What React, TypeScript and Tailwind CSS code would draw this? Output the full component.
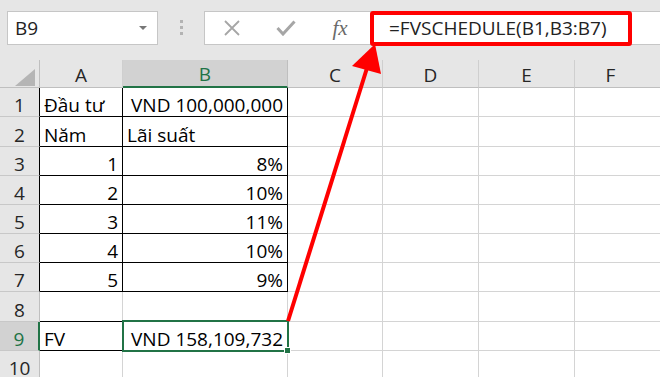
import React from "react";

type Cell = { t?: string; right?: boolean };
type RowData = { n: number; h: string; a: Cell; b: Cell };

const rows: RowData[] = [
  { n: 1, h: "h-[29px]", a: { t: "Đầu tư" }, b: { t: "VND 100,000,000", right: true } },
  { n: 2, h: "h-[30px]", a: { t: "Năm" }, b: { t: "Lãi suất" } },
  { n: 3, h: "h-[29px]", a: { t: "1", right: true }, b: { t: "8%", right: true } },
  { n: 4, h: "h-[29px]", a: { t: "2", right: true }, b: { t: "10%", right: true } },
  { n: 5, h: "h-[29px]", a: { t: "3", right: true }, b: { t: "11%", right: true } },
  { n: 6, h: "h-[29px]", a: { t: "4", right: true }, b: { t: "10%", right: true } },
  { n: 7, h: "h-[29px]", a: { t: "5", right: true }, b: { t: "9%", right: true } },
  { n: 8, h: "h-[30px]", a: {}, b: {} },
  { n: 9, h: "h-[29px]", a: { t: "FV" }, b: { t: "VND 158,109,732", right: true } },
  { n: 10, h: "h-[29px]", a: {}, b: {} },
];

function CellText({ cell }: { cell: Cell }) {
  return (
    <div
      className={`flex h-full items-end px-[4px] text-[19px] leading-[22px] text-black ${
        cell.right ? "justify-end" : "justify-start"
      }`}
    >
      {cell.t}
    </div>
  );
}

function SheetRow({ row }: { row: RowData }) {
  const boxed = row.n <= 7;
  const selected = row.n === 9;
  const headCls = selected
    ? "bg-[#d2d2d2] text-[#217346] border-r-2 border-r-[#217346]"
    : boxed
      ? "bg-[#e6e6e6] text-[#262626] border-r border-r-black"
      : "bg-[#e6e6e6] text-[#262626] border-r border-r-[#bfbfbf]";
  const aBorder = boxed
    ? "border-r-black border-b-black"
    : row.n === 8 || row.n === 9
      ? "border-r-[#d4d4d4] border-b-black"
      : "border-r-[#d4d4d4] border-b-[#d4d4d4]";
  const bBorder = boxed
    ? "border-r-black border-b-black"
    : row.n === 8
      ? "border-r-[#d4d4d4] border-b-black"
      : "border-r-[#d4d4d4] border-b-[#d4d4d4]";

  return (
    <div className={`flex ${row.h}`}>
      <div
        className={`flex w-[40px] shrink-0 items-end justify-center border-b border-b-[#c8c8c8] text-[19px] leading-[22px] ${headCls}`}
      >
        {row.n}
      </div>
      <div className={`w-[83px] shrink-0 border-r border-b ${aBorder}`}>
        <CellText cell={row.a} />
      </div>
      <div className={`w-[165px] shrink-0 border-r border-b ${bBorder}`}>
        <CellText cell={row.b} />
      </div>
      <div className="w-[95px] shrink-0 border-r border-b border-[#d4d4d4]" />
      <div className="w-[96px] shrink-0 border-r border-b border-[#d4d4d4]" />
      <div className="w-[96px] shrink-0 border-r border-b border-[#d4d4d4]" />
      <div className="flex-1 border-b border-[#d4d4d4]" />
    </div>
  );
}

function ColHead({ label, w, active }: { label: string; w: string; active?: boolean }) {
  return (
    <div
      className={`flex shrink-0 items-end justify-center text-[19px] leading-[22px] pb-[1px] ${w} ${
        active
          ? "bg-[#d2d2d2] text-[#217346] border-r border-r-[#bfbfbf] border-b-2 border-b-[#217346]"
          : "bg-[#e6e6e6] text-[#262626] border-r border-r-[#cfcfcf] border-b border-b-[#bfbfbf]"
      }`}
    >
      {label}
    </div>
  );
}

export default function App() {
  return (
    <div className="relative h-[377px] w-[660px] overflow-hidden bg-white font-['Open_Sans',sans-serif]">
      {/* name box + formula bar */}
      <div className="flex h-[60px] items-start bg-[#e6e6e6] pt-[11px]">
        <div className="ml-[7px] flex h-[34px] w-[151px] items-center justify-between border border-[#c6c6c6] bg-white pl-[7px] pr-[10px]">
          <span className="text-[19px] leading-none text-[#222]">B9</span>
          <svg width="8" height="5" viewBox="0 0 8 5">
            <path d="M0 0 L8 0 L4 4 Z" fill="#777" />
          </svg>
        </div>
        <div className="flex w-[46px] flex-col items-center gap-[3px] pt-[9px]">
          <span className="h-[3px] w-[3px] bg-[#b3b3b3]" />
          <span className="h-[3px] w-[3px] bg-[#b3b3b3]" />
          <span className="h-[3px] w-[3px] bg-[#b3b3b3]" />
        </div>
        <div className="flex h-[34px] flex-1 items-center border border-r-0 border-[#c6c6c6] bg-white">
          <div className="flex w-[162px] items-center">
            <div className="flex w-[54px] justify-center">
              <svg width="18" height="16" viewBox="0 0 18 16">
                <path d="M2 1 L16 15 M16 1 L2 15" stroke="#a6a6a6" strokeWidth="1.8" />
              </svg>
            </div>
            <div className="flex w-[54px] justify-center">
              <svg width="20" height="16" viewBox="0 0 20 16">
                <path d="M1.5 8 L7 14 L18.5 1.5" stroke="#a6a6a6" strokeWidth="3" fill="none" />
              </svg>
            </div>
            <div className="flex w-[54px] justify-center">
              <span className="font-['Liberation_Serif',serif] text-[21px] italic leading-none text-[#6a6a6a]">
                fx
              </span>
            </div>
          </div>
          <div className="ml-[3px] flex h-[35px] w-[262px] items-center rounded-[3px] border-4 border-[#ff0000] pl-[15px] text-[19px] leading-[27px] text-[#222]">
            =FVSCHEDULE(B1,B3:B7)
          </div>
        </div>
      </div>

      {/* column headers */}
      <div className="flex h-[28px]">
        <div className="flex w-[40px] shrink-0 items-end justify-end border-r border-b border-[#bfbfbf] bg-[#e6e6e6] pb-[1px] pr-[4px]">
          <svg width="20" height="17" viewBox="0 0 20 17">
            <path d="M20 0 L20 17 L0 17 Z" fill="#b5b5b5" />
          </svg>
        </div>
        <ColHead label="A" w="w-[83px]" />
        <ColHead label="B" w="w-[165px]" active />
        <ColHead label="C" w="w-[95px]" />
        <ColHead label="D" w="w-[96px]" />
        <ColHead label="E" w="w-[96px]" />
        <div className="flex flex-1 items-end justify-center border-b border-[#bfbfbf] bg-[#e6e6e6] pb-[1px] pr-[14px] text-[19px] leading-[22px] text-[#262626]">
          F
        </div>
      </div>

      {rows.map((r) => (
        <SheetRow key={r.n} row={r} />
      ))}

      {/* selection on B9 */}
      <div className="absolute left-[122px] top-[320px] h-[32px] w-[167px] border-2 border-[#217346]" />
      <div className="absolute left-[284px] top-[347px] h-[7px] w-[7px] border border-white bg-[#217346]" />

      {/* red arrow */}
      <svg className="pointer-events-none absolute inset-0" width="660" height="377" viewBox="0 0 660 377">
        <line x1="288" y1="321" x2="367" y2="68" stroke="#ff0000" strokeWidth="4" />
        <polygon points="375,44 352,66 381,74" fill="#ff0000" />
      </svg>
    </div>
  );
}
